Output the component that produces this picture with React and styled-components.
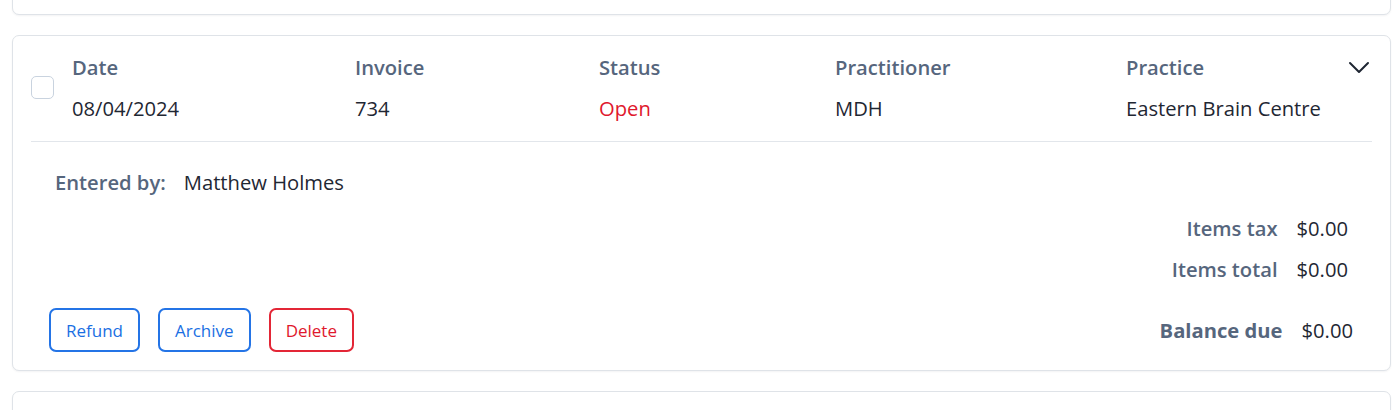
import React from 'react'
import styled, { createGlobalStyle } from 'styled-components'

const GlobalStyle = createGlobalStyle`
    body {
        margin: 0;
        background: #ffffff;
        font-family: "Open Sans", "Noto Sans", sans-serif;
    }
`

const columns = [
    { label: 'Date', value: '08/04/2024', width: 283 },
    { label: 'Invoice', value: '734', width: 244 },
    { label: 'Status', value: 'Open', width: 236, tone: 'danger' },
    { label: 'Practitioner', value: 'MDH', width: 291 },
    { label: 'Practice', value: 'Eastern Brain Centre', width: 220 },
]

const totals = [
    { label: 'Items tax', value: '$0.00' },
    { label: 'Items total', value: '$0.00' },
]

const Chevron = () => (
    <svg width="22" height="14" viewBox="0 0 22 14" fill="none">
        <path d="M2 2l9 9 9-9" stroke="#1f2733" strokeWidth="2" strokeLinecap="round" strokeLinejoin="round" />
    </svg>
)

const InvoiceCard = () => {
  return (
    <Card>
        <Header>
            <Check type="checkbox" />
            {columns.map(col => (
                <Column key={col.label} $width={col.width}>
                    <Label>{col.label}</Label>
                    <Value $tone={col.tone}>{col.value}</Value>
                </Column>
            ))}
            <Toggle aria-label="Collapse"><Chevron /></Toggle>
        </Header>
        <Body>
            <EnteredBy>
                <Label>Entered by:</Label>
                <Value>Matthew Holmes</Value>
            </EnteredBy>
            <Totals>
                {totals.map(t => (
                    <TotalRow key={t.label}>
                        <Label>{t.label}</Label>
                        <Value>{t.value}</Value>
                    </TotalRow>
                ))}
            </Totals>
            <Footer>
                <Actions>
                    <ActionButton>Refund</ActionButton>
                    <ActionButton>Archive</ActionButton>
                    <ActionButton $danger>Delete</ActionButton>
                </Actions>
                <Balance>
                    <BalanceLabel>Balance due</BalanceLabel>
                    <Value>$0.00</Value>
                </Balance>
            </Footer>
        </Body>
    </Card>
  )
}

const App = () => {
  return (
    <>
        <GlobalStyle />
        <List>
            <Card $collapsed />
            <InvoiceCard />
            <Card $collapsed />
        </List>
    </>
  )
}

const List = styled.div`
    display: flex;
    flex-direction: column;
    gap: 20px;
    padding: 0 9px 0 12px;
    margin-top: -50px;
`

const Card = styled.div`
    box-sizing: border-box;
    background: #fff;
    border: 1px solid #dfe3e8;
    border-radius: 7px;
    box-shadow: 0 1px 2px rgba(16, 24, 40, 0.05);
    min-height: ${p => p.$collapsed ? '65px' : 'auto'};
`

const Header = styled.div`
    display: flex;
    align-items: center;
    margin: 0 18px;
    padding: 19px 0 21px;
    border-bottom: 1px solid #e2e6eb;
`

const Check = styled.input`
    appearance: none;
    box-sizing: border-box;
    width: 23px;
    height: 23px;
    margin: 0 18px 0 0;
    border: 1.5px solid #c9d3df;
    border-radius: 5px;
    background: #fff;
`

const Column = styled.div`
    width: ${p => p.$width}px;
    display: flex;
    flex-direction: column;
    gap: 17px;
`

const Label = styled.span`
    font-size: 20.2px;
    line-height: 24px;
    font-weight: 600;
    color: #56667d;
`

const Value = styled.span`
    font-size: 20.2px;
    line-height: 24px;
    font-weight: 400;
    color: ${p => p.$tone === 'danger' ? '#e0182d' : '#1f2733'};
`

const Toggle = styled.button`
    margin-left: auto;
    margin-right: 2px;
    align-self: flex-start;
    margin-top: 6px;
    border: none;
    padding: 0;
    background: transparent;
    display: flex;
`

const Body = styled.div`
    display: flex;
    flex-direction: column;
    padding: 28px 37px 18px 36px;
`

const EnteredBy = styled.div`
    display: flex;
    gap: 18px;
    padding-left: 6px;
`

const Totals = styled.div`
    display: flex;
    flex-direction: column;
    align-items: flex-end;
    gap: 17px;
    margin-top: 22px;
    padding-right: 5px;
`

const TotalRow = styled.div`
    display: flex;
    gap: 19px;
`

const Footer = styled.div`
    display: flex;
    align-items: center;
    justify-content: space-between;
    margin-top: 27px;
`

const Actions = styled.div`
    display: flex;
    gap: 18px;
`

const ActionButton = styled.button`
    box-sizing: border-box;
    height: 44px;
    padding: 0 15px;
    border: 2px solid ${p => p.$danger ? '#e32636' : '#2474e6'};
    border-radius: 7px;
    background: #fff;
    color: ${p => p.$danger ? '#e0182d' : '#1a6fe3'};
    font-family: "Open Sans", "Noto Sans", sans-serif;
    font-size: 17px;
    cursor: pointer;
`

const Balance = styled.div`
    display: flex;
    gap: 19px;
`

const BalanceLabel = styled(Label)`
    font-weight: 700;
`

export default App
